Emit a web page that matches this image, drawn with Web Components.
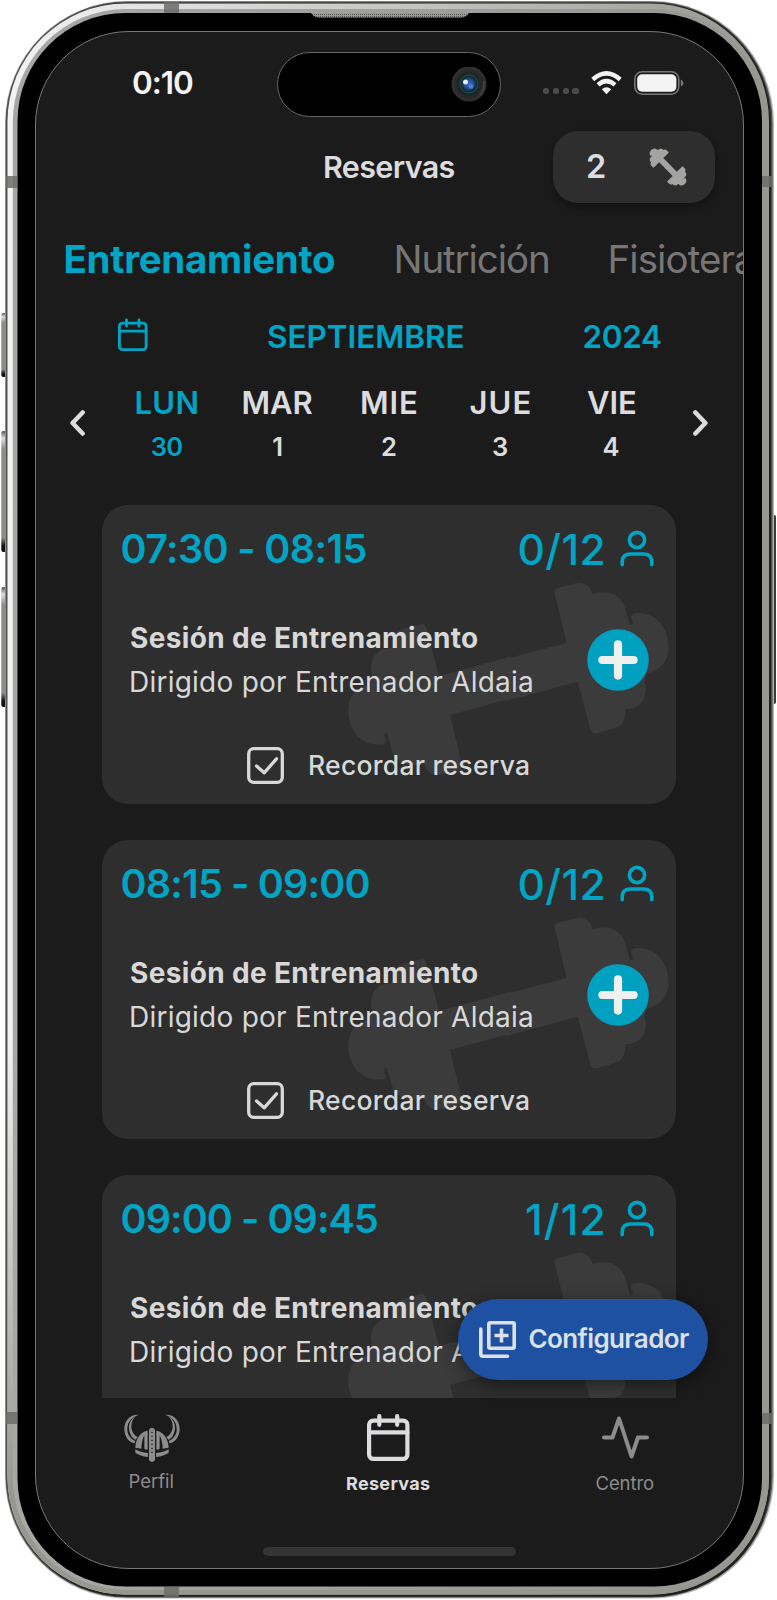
<!DOCTYPE html>
<html lang="es">
<head>
<meta charset="utf-8">
<title>Reservas</title>
<style>
html,body{margin:0;padding:0;background:#fff}
body{width:777px;height:1600px;overflow:hidden;font-family:Inter,"Liberation Sans",sans-serif}
</style>
</head>
<body>
<phone-frame>
  <status-bar></status-bar>
  <app-header></app-header>
  <category-tabs></category-tabs>
  <month-row></month-row>
  <week-strip></week-strip>
  <session-list></session-list>
  <tab-bar></tab-bar>
</phone-frame>
<script>
const define = (name, html, setup) => customElements.define(name, class extends HTMLElement {
  connectedCallback() {
    if (this.shadowRoot) return;
    const t = document.createElement('template');
    t.innerHTML = typeof html === 'function' ? html(this) : html;
    this.attachShadow({mode: 'open'}).append(t.content.cloneNode(true));
    if (setup) setup(this);
  }
});

/* A single line of text whose box is exactly its ink width; tracking fills the box. */
const ctx = document.createElement('canvas').getContext('2d');
define('fit-text', el => {
  const size = +el.getAttribute('size'), weight = el.getAttribute('weight') || 500, w = +el.getAttribute('w');
  const text = el.getAttribute('text');
  ctx.font = `${weight} ${size}px Inter`;
  const m = ctx.measureText(text);
  const ink = m.actualBoundingBoxRight + m.actualBoundingBoxLeft;
  const ls = text.length > 1 ? (w - ink) / (text.length - 1) : 0;
  return `<style>:host{display:block;flex:none;width:${w}px;height:${size}px;line-height:${size}px;font-size:${size}px;font-weight:${weight};white-space:nowrap}
  span{display:block;width:max-content;letter-spacing:${ls.toFixed(3)}px;margin-left:${m.actualBoundingBoxLeft.toFixed(2)}px}</style><span>${text}</span>`;
});

const dumbbell = (color) => `<g fill="${color}">${['', 'rotate(180 537 563.5)'].map(t => `<path transform="${t}" d="M530 504L712 455L676 306Q673 295 684 291L743 276Q778 272 790 309Q832 295 862 316Q880 328 887 350L901 401Q908 404 911 396L905 376Q904 366 925 366Q985 366 1010 425Q1028 480 1003 518Q985 540 955 546L945 570Q955 600 942 628Q925 655 886 656Q892 690 868 706Q830 722 797 728Q787 728 783 715L745 572L530 630Z"/>`).join('')}</g>`;
const calendar = (w, h, sw) => `<svg width="${w}" height="${h}" viewBox="0 0 ${w} ${h}" fill="none" stroke="currentColor" stroke-width="${sw}" stroke-linecap="round"><rect x="${sw/2}" y="${h*.14}" width="${w-sw}" height="${h*.86-sw/2}" rx="${w*.1}"/><path d="M${sw/2} ${h*.39}H${w-sw/2}M${w*.29} ${sw/2}V${h*.23}M${w*.71} ${sw/2}V${h*.23}"/></svg>`;

define('phone-frame', `<style>
:host{display:block;position:relative;width:777px;height:1600px;box-sizing:border-box;padding:31px 33px 31px 35px}
.art{position:absolute;inset:0}
.screen{position:relative;box-sizing:border-box;height:1538px;border:1px solid #777;border-radius:94px;background:#1b1b1b;overflow:hidden;display:flex;flex-direction:column}
.home{position:absolute;left:227px;top:1515px;width:253px;height:9px;border-radius:5px;background:#333534}
</style>
<svg class="art" width="777" height="1600" viewBox="0 0 777 1600">
<defs>
<linearGradient id="rim"><stop offset="0" stop-color="#f3f3f4"/><stop offset=".25" stop-color="#dcdcde"/><stop offset=".75" stop-color="#b0b0ae"/><stop offset="1" stop-color="#96978f"/></linearGradient>
<linearGradient id="fade" x2="0" y2="1"><stop offset="0" stop-color="#96978f" stop-opacity="0"/><stop offset=".65" stop-color="#96978f" stop-opacity="0"/><stop offset=".94" stop-color="#96978f"/></linearGradient>
<linearGradient id="in"><stop offset="0" stop-color="#a7a8a6"/><stop offset="1" stop-color="#96978f"/></linearGradient>
<linearGradient id="btn" x2="0" y2="1"><stop offset="0" stop-color="#555"/><stop offset=".06" stop-color="#ddd"/><stop offset=".15" stop-color="#8b8d8a"/><stop offset=".88" stop-color="#8b8d8a"/><stop offset=".95" stop-color="#111"/></linearGradient>
<pattern id="mesh" width="2" height="2" patternUnits="userSpaceOnUse"><rect width="2" height="2" fill="#999"/><rect width="1" height="1" fill="#555"/></pattern>
</defs>
<rect x="1.3" y="313" width="6" height="64" rx="2" fill="url(#btn)"/>
<rect x="1.3" y="431" width="6" height="121" rx="2" fill="url(#btn)"/>
<rect x="1.3" y="587" width="6" height="120" rx="2" fill="url(#btn)"/>
<rect x="770" y="515" width="6" height="189" rx="2" fill="#3a3b3a"/>
<rect x="5" y="1" width="769" height="1597.5" rx="122" fill="#b4b5b3"/>
<rect x="5.6" y="1.5" width="767" height="1596" rx="121.500" fill="#51524f"/>
<rect x="8" y="2.800" width="763" height="1594" rx="119" fill="#202120"/>
<rect x="7.500" y="3.500" width="761.500" height="1591" rx="118" fill="url(#rim)"/>
<rect x="7.500" y="3.500" width="761.500" height="1591" rx="118" fill="url(#fade)"/>
<rect x="12.800" y="9" width="753" height="1581" rx="113" fill="url(#in)"/>
<g fill="#6c6d6a" opacity=".85"><path d="M164 2h15v11h-15zM6 176h11v12H6zM762 176h11v11h-11zM6 1412h11v12H6zM762 1413h11v11h-11zM164 1587h15v11h-15z"/></g>
<rect x="17.500" y="13" width="744.500" height="1573.500" rx="108" fill="#000"/>
<path d="M311 13H469Q466 17.500 461 17.500H319Q314 17.500 311 13Z" fill="url(#mesh)"/>
</svg>
<div class="screen"><slot></slot><div class="home"></div></div>`);

define('status-bar', `<style>
:host{display:flex;height:65px;padding:20px 0 0 97px;align-items:center;color:#f3f3f3;flex:none}
.island{flex:none;margin-left:84px;margin-right:42px;width:222px;height:63px;border:1px solid #666;border-radius:33px;background:#000;display:flex;align-items:center;justify-content:flex-end}
.island svg{margin-right:13px}
.dots{display:flex;gap:3.500px;margin-top:13px}
.dots i{width:6.300px;height:6.300px;border-radius:2.500px;background:#4b4b4b}
fit-text{margin-top:-3px}
.wifi{margin:-3px 12px 0 12.500px}.bat{margin-top:-3px}
svg{display:block;flex:none}
</style>
<fit-text text="0:10" size="31.500" weight="600" w="60"></fit-text>
<div class="island"><svg width="36" height="36" viewBox="-18 -17 36 36"><defs><radialGradient id="c"><stop offset="0" stop-color="#3b6fd0"/><stop offset=".25" stop-color="#254f9a"/><stop offset=".38" stop-color="#12333c"/><stop offset=".55" stop-color="#1c2426"/><stop offset=".7" stop-color="#262626"/><stop offset="1" stop-color="#333"/></radialGradient></defs><circle r="17.500" fill="url(#c)"/><circle r="9" fill="none" stroke="#14505c" stroke-width="1"/><path d="M11 11Q15.500 5 15-3" stroke="#555" stroke-width="2" fill="none" opacity=".45"/><circle cx="-3.500" cy="-2" r="2.500" fill="#e6efff"/><circle cx="2" cy="2.500" r="2.300" fill="#4d80da"/></svg></div>
<div class="dots"><i></i><i></i><i></i><i></i></div>
<svg class="wifi" width="31" height="24" viewBox="0 0 31 24" fill="none" stroke="#f3f3f3" stroke-width="4.400"><path d="M1.800 8.500Q15.500-3.800 29.200 8.500M7 13.800Q15.500 6.400 24 13.800"/><path d="M10.800 18.300Q15.500 14.300 20.200 18.300L15.500 23.200Z" fill="#f3f3f3" stroke="none"/></svg>
<svg class="bat" width="50" height="24" viewBox="0 0 50 24"><rect x=".8" y=".8" width="44" height="22.400" rx="7.500" fill="none" stroke="#777" stroke-width="1.600"/><rect x="3.200" y="3.200" width="39.200" height="17.600" rx="5" fill="#f3f3f3"/><path d="M46.800 8.500Q49.500 10 49.500 12T46.800 15.500Z" fill="#777"/></svg>`);

define('app-header', `<style>
:host{display:flex;flex:none;height:72px;margin-top:13.500px;padding:0 28px 0 289px;justify-content:space-between;align-items:center;color:#dcdcdf}
.credits{display:flex;align-items:center;box-sizing:border-box;width:162px;height:72px;border-radius:25px;background:#2e2e2e;padding:0 0 0 34px;gap:43.500px;box-shadow:0 4px 9px #0005}
svg{display:block}fit-text{margin-top:1.500px}
</style>
<fit-text text="Reservas" size="30.500" weight="600" w="129.500"></fit-text>
<div class="credits"><fit-text text="2" size="32.500" weight="600" w="18"></fit-text><svg width="38" height="38" viewBox="0 0 38 38"><g transform="translate(19 19) rotate(60) scale(.0485) translate(-537 -563.5)">${dumbbell('#a4a4a2')}</g></svg></div>`);

define('category-tabs', `<style>
:host{display:flex;flex:none;height:60px;margin-top:27px;padding-left:29.500px;align-items:center;color:#767676}
fit-text:first-of-type{color:#00a4c4}.n{margin-left:61.500px}.f{margin-left:62.500px}
</style><fit-text text="Entrenamiento" size="38.500" weight="700" w="269.500"></fit-text><fit-text class="n" text="Nutrición" size="38.500" weight="400" w="151.500"></fit-text><fit-text class="f" text="Fisiotera" size="38.500" weight="400" w="142.500"></fit-text>`);

define('month-row', `<style>
:host{display:flex;flex:none;height:40px;margin-top:27px;padding:0 82px;align-items:center;color:#00a4c4}
svg{margin-top:-3px}.m{margin-left:120.500px}.y{margin-left:120px}
</style>${calendar(30.5, 33.5, 2.9)}<fit-text class="m" text="SEPTIEMBRE" size="31.500" weight="560" w="195.500"></fit-text><fit-text class="y" text="2024" size="31.500" weight="560" w="77.500"></fit-text>`);

define('week-strip', `<style>
:host{display:flex;flex:none;height:90px;margin-top:22px;padding:0 35px 0 34px;align-items:center;justify-content:space-between;color:#dcdcdf}
.days{flex:none;width:555px;display:grid;grid-template-columns:repeat(5,111px);margin-left:0}
.d{height:90px;display:flex;flex-direction:column;align-items:center;padding-top:8.500px;box-sizing:border-box;gap:15.500px}
.d:first-child{color:#00a4c4}
svg{display:block;margin-top:-2px}
</style>
<svg width="15" height="26" viewBox="0 0 15 26" fill="none" stroke="currentColor" stroke-width="4.500" stroke-linecap="round" stroke-linejoin="round"><path d="M12.600 2.500L2.600 13L12.600 23.500"/></svg>
<div class="days">${[['LUN',61,'30',30.5],['MAR',69,'1',9.5],['MIE',54,'2',14],['JUE',59,'3',14],['VIE',48,'4',15]].map(d => `<div class="d"><fit-text text="${d[0]}" size="31" weight="560" w="${d[1]}"></fit-text><fit-text text="${d[2]}" size="25.500" weight="600" w="${d[3]}"></fit-text></div>`).join('')}</div>
<svg width="15" height="26" viewBox="0 0 15 26" fill="none" stroke="currentColor" stroke-width="4.500" stroke-linecap="round" stroke-linejoin="round"><path d="M2.400 2.500L12.400 13L2.400 23.500"/></svg>`);

define('session-card', el => `<style>
:host{display:block;flex:none;position:relative;box-sizing:border-box;width:574px;height:298.500px;border-radius:26px;background:#2e2e2e;color:#d8d8d8;overflow:hidden}
.art{position:absolute;left:244.200px;top:75.500px}
.top,.mid,.rem{position:relative;display:flex}
.top{color:#00a4c4;justify-content:space-between;padding:23.500px 22.500px 0 19.500px;height:42px}
.top>fit-text{margin-top:1.500px}
.seats{display:flex;gap:16px}.seats svg{margin-top:1.500px}
.mid{padding:58px 27px 0 29px;justify-content:space-between;height:77px}
.txt{display:flex;flex-direction:column;gap:16px;margin-top:-5px}
.rem{padding:41px 0 0 145px;align-items:center;gap:26px}
svg{display:block;flex:none}
</style>
<svg class="art" width="326.700" height="200" viewBox="50 270 980 600">${dumbbell('#3b3b3b')}</svg>
<div class="top"><fit-text text="${el.getAttribute('time')}" size="39.500" weight="560" w="${el.getAttribute('tw')}"></fit-text>
<div class="seats"><fit-text text="${el.getAttribute('seats')}" size="42.500" weight="530" w="${el.getAttribute('sw')}"></fit-text><svg width="34" height="37" viewBox="0 0 34 37" fill="none" stroke="currentColor" stroke-width="3.600" stroke-linecap="round"><circle cx="17" cy="10" r="7.600"/><path d="M2.200 34.800V32Q2.200 24 10.500 24H23.500Q31.800 24 31.800 32V34.800"/></svg></div></div>
<div class="mid"><div class="txt"><fit-text text="Sesión de Entrenamiento" size="28" weight="650" w="347"></fit-text><fit-text text="Dirigido por Entrenador Aldaia" size="28" weight="440" w="401"></fit-text></div>
${el.hasAttribute('covered') ? '' : `<svg width="62" height="62" viewBox="0 0 62 62"><circle cx="31" cy="31" r="30.800" fill="#00a0c0"/><path d="M31 15.400V46.600M15.400 31H46.600" stroke="#f0f0f0" stroke-width="8.200" stroke-linecap="round"/></svg>`}</div>
${el.hasAttribute('covered') ? '' : `<div class="rem"><svg width="37" height="37" viewBox="0 0 37 37" fill="none" stroke="currentColor" stroke-width="3.300" stroke-linecap="round" stroke-linejoin="round"><rect x="1.700" y="1.700" width="33.600" height="33.600" rx="5"/><path d="M9.500 19L17.200 25.800L29.500 11.800"/></svg><fit-text text="Recordar reserva" size="26.500" weight="550" w="219"></fit-text></div>`}`);

define('session-list', `<style>
:host{display:block;flex:none;position:relative;height:893px;margin-top:36.500px}
.clip{height:893px;overflow:hidden;display:flex;flex-direction:column;align-items:flex-start;gap:36.500px;padding-left:66px}
.fab{position:absolute;left:422px;top:794px;width:249.500px;height:81px;border-radius:41px;background:#1e51a1;color:#dce0e8;box-shadow:0 4px 18px #0007;display:flex;align-items:center;gap:13.500px;padding-left:21px;box-sizing:border-box}
.clip,.fab{box-sizing:border-box}.fab fit-text{margin-top:-1px}.fab svg{display:block}
</style>
<div class="clip">
<session-card time="07:30 - 08:15" tw="244" seats="0/12" sw="84"></session-card>
<session-card time="08:15 - 09:00" tw="248" seats="0/12" sw="84"></session-card>
<session-card covered time="09:00 - 09:45" tw="255.500" seats="1/12" sw="77.500"></session-card>
</div>
<div class="fab"><svg width="37" height="37" viewBox="0 0 37 37" fill="none" stroke="currentColor" stroke-width="3.600" stroke-linejoin="round"><rect x="9.800" y="1.800" width="25.400" height="25.400" rx="1.500"/><path d="M22.500 7.500V21.500M15.500 14.500H29.500" /><path d="M1.800 8V33Q1.800 35.200 4 35.200H28.500" stroke-linecap="round"/></svg><fit-text text="Configurador" size="26" weight="600" w="159.500"></fit-text></div>`);

define('tab-bar', `<style>
:host{display:grid;flex:none;grid-template-columns:1fr 250px 1fr;height:170px;color:#8c8c8c;box-sizing:border-box}
div{display:flex;flex-direction:column;align-items:center}
svg{display:block}
.a{align-items:flex-start;padding:14px 0 0 85.500px}.a fit-text{margin:8px 0 0 8px}
.b{padding-top:16px;color:#dcdcdf;margin-left:-2px}.b fit-text{margin-top:13.500px}
.c{align-items:flex-start;padding:18px 0 0 87px}.c fit-text{margin:15px 0 0 -5px}
</style>
<div class="a"><svg width="60" height="51.700" viewBox="365 95 180 155" fill="currentColor">${['', 'translate(910 0) scale(-1 1)'].map(t => `<g transform="${t}"><path d="M416 103C386 101 371 124 372 148C373 172 388 186 402 189L405 182C388 174 380 160 381 145C381 125 394 110 416 103Z"/><path d="M407 108C393 114 385 130 386 145C388 162 396 174 406 178L412 170C400 164 394 152 393 140C393 126 398 114 407 108Z"/><path d="M442 151V208Q436 208 432 206V165Q424 180 423 205L405 202C406 174 422 153 442 151Z"/><path d="M405 207Q421 217 443 218V230Q419 227 405 217Z"/></g>`).join('')}<rect x="446" y="143" width="18" height="101" rx="8"/><g fill="#1b1b1b"><path d="M453 154h4v4h-4zM453 166h4v4h-4zM453 178h4v4h-4zM453 190h4v4h-4zM453 202h4v4h-4zM453 214h4v4h-4z"/></g></svg><fit-text text="Perfil" size="18.500" weight="400" w="44"></fit-text></div>
<div class="b">${calendar(42.5, 47, 4.2)}<fit-text text="Reservas" size="18" weight="650" w="83"></fit-text></div>
<div class="c"><svg width="47" height="43" viewBox="0 0 47 43" fill="none" stroke="currentColor" stroke-width="4" stroke-linecap="round" stroke-linejoin="round"><path d="M2 21.500H10.500L17 2.500L29.500 40.500L36 21.500H45"/></svg><fit-text text="Centro" size="18.500" weight="400" w="57.500"></fit-text></div>`);
</script>
</body>
</html>
